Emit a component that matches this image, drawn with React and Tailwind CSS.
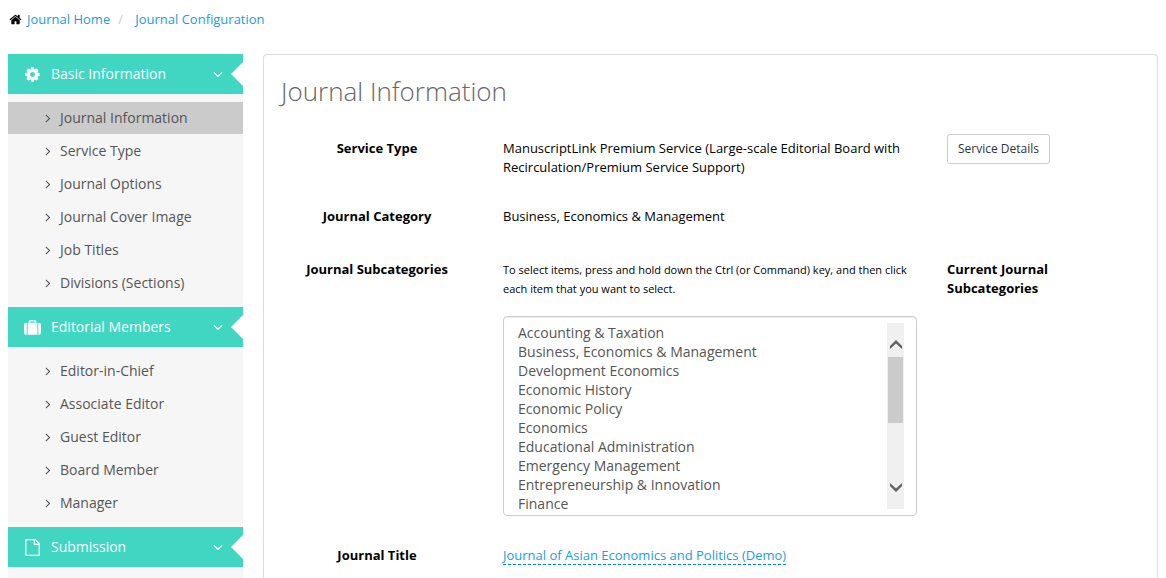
import React from 'react';

const PATHS = {
  home: 'M1472 992v480q0 26-19 45t-45 19h-384v-384h-256v384h-384q-26 0-45-19t-19-45v-480q0-1 .5-3t.5-3l575-474 575 474q1 2 1 6zm223-69l-62 74q-8 9-21 11h-3q-13 0-21-7l-692-577-692 577q-12 8-24 7-13-2-21-11l-62-74q-8-10-7-23.5t11-21.5l719-599q32-26 76-26t76 26l244 204v-195q0-14 9-23t23-9h192q14 0 23 9t9 23v408l219 182q10 8 11 21.5t-7 23.5z',
  cog: 'M1152 896q0-106-75-181t-181-75-181 75-75 181 75 181 181 75 181-75 75-181zm512-109v222q0 12-8 23t-20 13l-185 28q-19 54-39 91 35 50 107 138 10 12 10 25t-9 23q-27 37-99 108t-94 71q-12 0-26-9l-138-108q-44 23-91 38-16 136-29 186-7 28-36 28h-222q-14 0-24.5-8.5t-11.5-21.5l-28-184q-49-16-90-37l-141 107q-10 9-25 9-14 0-25-11-126-114-165-168-7-10-7-23 0-12 8-23 15-21 51-66.5t54-70.5q-27-50-41-99l-183-27q-13-2-21-12.5t-8-23.5v-222q0-12 8-23t19-13l186-28q14-46 39-92-40-57-107-138-10-12-10-24 0-10 9-23 26-36 98.5-107.5t94.5-71.5q13 0 26 10l138 107q44-23 91-38 16-136 29-186 7-28 36-28h222q14 0 24.5 8.5t11.5 21.5l28 184q49 16 90 37l142-107q9-9 24-9 13 0 25 10 129 119 165 170 7 8 7 22 0 12-8 23-15 21-51 66.5t-54 70.5q26 50 41 98l183 28q13 2 21 12.5t8 23.5z',
  suitcase: 'M640 384h512v-128h-512v128zm-352 0v1280h-64q-92 0-158-66t-66-158v-832q0-92 66-158t158-66h64zm1120 0v1280h-1024v-1280h128v-160q0-40 28-68t68-28h576q40 0 68 28t28 68v160h128zm384 224v832q0 92-66 158t-158 66h-64v-1280h64q92 0 158 66t66 158z',
  file: 'M1596 380q28 28 48 76t20 88v1152q0 40-28 68t-68 28h-1344q-40 0-68-28t-28-68v-1600q0-40 28-68t68-28h896q40 0 88 20t76 48zm-444-244v376h376q-10-29-22-41l-313-313q-12-12-41-22zm384 1528v-1024h-416q-40 0-68-28t-28-68v-416h-768v1536h1280z',
  down: 'M1395 736q0 13-10 23l-466 466q-10 10-23 10t-23-10l-466-466q-10-10-10-23t10-23l50-50q10-10 23-10t23 10l393 393 393-393q10-10 23-10t23 10l50 50q10 10 10 23z',
  right: 'M1171 960q0 13-10 23l-466 466q-10 10-23 10t-23-10l-50-50q-10-10-10-23t10-23l393-393-393-393q-10-10-10-23t10-23l50-50q10-10 23-10t23 10l466 466q10 10 10 23z',
};

function Icon({ name, className }) {
  return (
    <svg viewBox="0 0 1792 1792" fill="currentColor" aria-hidden="true" className={className}>
      <path d={PATHS[name]} />
    </svg>
  );
}

const SECTIONS = [
  {
    title: 'Basic Information',
    icon: 'cog',
    items: ['Journal Information', 'Service Type', 'Journal Options', 'Journal Cover Image', 'Job Titles', 'Divisions (Sections)'],
  },
  {
    title: 'Editorial Members',
    icon: 'suitcase',
    items: ['Editor-in-Chief', 'Associate Editor', 'Guest Editor', 'Board Member', 'Manager'],
  },
  { title: 'Submission', icon: 'file', items: [] },
];

const SUBCATEGORIES = [
  'Accounting & Taxation',
  'Business, Economics & Management',
  'Development Economics',
  'Economic History',
  'Economic Policy',
  'Economics',
  'Educational Administration',
  'Emergency Management',
  'Entrepreneurship & Innovation',
  'Finance',
];

function Section({ title, icon, items }) {
  return (
    <section>
      <button type="button" className="flex h-10 w-full items-center bg-[#41d6c1] pl-4 text-left text-white">
        <span className="flex w-[17px] justify-center">
          <Icon name={icon} className="size-[17px]" />
        </span>
        <span className="ml-2.5 flex-1">{title}</span>
        <Icon name="down" className="mr-[5px] size-4" />
        <svg viewBox="0 0 12 24" className="h-6 w-3 fill-white" aria-hidden="true">
          <path d="M12 0v24L0 12z" />
        </svg>
      </button>
      {items.length > 0 && (
        <ul className="flex flex-col gap-px py-2">
          {items.map((item) => (
            <li key={item}>
              <a
                href="#"
                className={
                  item === 'Journal Information'
                    ? 'flex h-8 items-center bg-[#cbcbcb] pl-[33px]'
                    : 'flex h-8 items-center pl-[33px]'
                }
              >
                <Icon name="right" className="mr-[5px] size-3.5" />
                {item}
              </a>
            </li>
          ))}
        </ul>
      )}
    </section>
  );
}

function Scrollbar() {
  return (
    <div aria-hidden="true" className="flex w-[17px] flex-col items-center bg-[#f0f0f0] py-[17px]">
      <svg viewBox="0 0 12 9" className="mb-2 h-[9px] w-3 shrink-0 fill-[#606060]">
        <path d="M6 0l6 6v3L6 3.6 0 9V6z" />
      </svg>
      <div className="h-[66px] w-[15px] shrink-0 bg-[#cbcbcb]" />
      <svg viewBox="0 0 12 9" className="mt-auto h-[9px] w-3 shrink-0 fill-[#606060]">
        <path d="M6 9l6-6V0L6 5.4 0 0v3z" />
      </svg>
    </div>
  );
}

export default function App() {
  return (
    <div className="flex min-h-screen flex-col bg-white px-2 font-['Open_Sans',sans-serif] text-[13px] leading-[19px] text-black">
      <nav aria-label="Breadcrumb" className="flex h-[54px] items-start pt-2.5 text-[#1b9ddb]">
        <Icon name="home" className="mt-[3px] ml-px size-[13px] text-black" />
        <a href="#" className="ml-[5px]">Journal Home</a>
        <span className="mx-2 w-[9px] text-[#cccccc]">/</span>
        <a href="#">Journal Configuration</a>
      </nav>

      <div className="flex flex-1 gap-5">
        <aside className="w-[235px] shrink-0 bg-[#f6f6f6] text-sm text-[#555555]">
          {SECTIONS.map((section) => (
            <Section key={section.title} {...section} />
          ))}
        </aside>

        <main className="min-w-0 flex-1 rounded-t border border-b-0 border-[#dddddd] pr-[3px] pl-0.5">
          <h1 className="px-[15px] pt-4 pb-[23px] text-[26px] leading-10 font-light text-[#666666]">Journal Information</h1>

          <div className="flex flex-col gap-[30px]">
            <div className="grid grid-cols-12">
              <div className="col-span-3 px-[15px] pt-[5px] text-center font-bold">Service Type</div>
              <div className="col-span-6 px-[15px] pt-[5px]">
                ManuscriptLink Premium Service (Large-scale Editorial Board with Recirculation/Premium Service Support)
              </div>
              <div className="col-span-3 px-[15px]">
                <button type="button" className="h-[30px] rounded-[3px] border border-[#cccccc] px-2.5 text-xs text-[#333333]">
                  Service Details
                </button>
              </div>
            </div>

            <div className="grid grid-cols-12 pb-1">
              <div className="col-span-3 px-[15px] text-center font-bold">Journal Category</div>
              <div className="col-span-6 px-[15px]">Business, Economics &amp; Management</div>
            </div>

            <div className="grid grid-cols-12">
              <label htmlFor="subcategories" className="col-span-3 px-[15px] text-center font-bold">
                Journal Subcategories
              </label>
              <div className="col-span-6 px-[15px]">
                <p className="text-[11px] leading-[19px]">
                  To select items, press and hold down the Ctrl (or Command) key, and then click each item that you want to select.
                </p>
                <div className="mt-[18px] flex h-[200px] rounded border border-[#cccccc] px-3 py-1.5 shadow-[inset_0_1px_1px_rgba(0,0,0,0.075)]">
                  <select
                    id="subcategories"
                    multiple
                    className="h-full min-w-0 flex-1 bg-transparent text-sm leading-[19px] text-[#555555] outline-none [scrollbar-width:none]"
                  >
                    {SUBCATEGORIES.map((name) => (
                      <option key={name} className="h-[19px] px-0.5 py-0 leading-[19px]">{name}</option>
                    ))}
                  </select>
                  <Scrollbar />
                </div>
              </div>
              <div className="col-span-3 px-[15px] font-bold">
                <div className="max-w-32">Current Journal Subcategories</div>
              </div>
            </div>

            <div className="grid grid-cols-12">
              <div className="col-span-3 px-[15px] text-center font-bold">Journal Title</div>
              <div className="col-span-6 px-[15px]">
                <a href="#" className="border-b border-dashed border-[#0088cc] text-[#1b9ddb]">
                  Journal of Asian Economics and Politics (Demo)
                </a>
              </div>
            </div>
          </div>
        </main>
      </div>
    </div>
  );
}
